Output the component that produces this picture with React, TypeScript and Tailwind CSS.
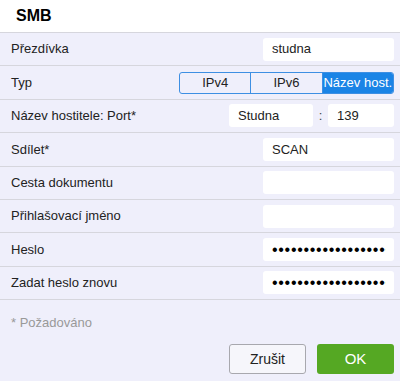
import React, { useState } from 'react';

const FONT = { fontFamily: '"Liberation Sans", Arial, sans-serif' };

const TextBox: React.FC<{ value?: string; className?: string; password?: boolean }> = ({ value = '', className = '', password }) => (
  <div className={`h-[23px] bg-white rounded-[3px] flex items-center pl-[9px] pr-[8px] text-[13px] text-[#222] whitespace-nowrap ${className}`}>
    {password ? (
      <span className="block w-full overflow-hidden text-[16px] leading-[23px] tracking-[0.7px] text-black">{'•'.repeat(20)}</span>
    ) : (
      value
    )}
  </div>
);

const Row: React.FC<{ label: string; children?: React.ReactNode }> = ({ label, children }) => (
  <div className="h-[33.4px] flex items-center justify-between border-b border-[#d6d6dd] pl-[11px] pr-[6px]">
    <span className="text-[13px] text-[#222]">{label}</span>
    {children}
  </div>
);

export default function App() {
  const [typ, setTyp] = useState<'ipv4' | 'ipv6' | 'host'>('host');
  const segs: { id: 'ipv4' | 'ipv6' | 'host'; label: string }[] = [
    { id: 'ipv4', label: 'IPv4' },
    { id: 'ipv6', label: 'IPv6' },
    { id: 'host', label: 'Název host.' },
  ];

  return (
    <div className="w-[400px] h-[381px] bg-[#efeffb] flex flex-col" style={FONT}>
      <div className="h-[33px] bg-white border-b border-[#d6d6dd] flex items-center pl-[16px]">
        <span className="text-[16px] font-bold text-black">SMB</span>
      </div>

      <Row label="Přezdívka">
        <TextBox value="studna" className="w-[131px]" />
      </Row>
      <Row label="Typ">
        <div className="flex w-[215px] h-[22px] border border-[#3d8fe3] rounded-[3px] overflow-hidden text-[13px]">
          {segs.map((s, i) => (
            <button
              key={s.id}
              onClick={() => setTyp(s.id)}
              className={`flex-1 flex items-center justify-center ${i > 0 ? 'border-l border-[#3d8fe3]' : ''} ${
                typ === s.id ? 'bg-[#1a84e6] text-white' : 'bg-transparent text-[#222]'
              }`}
            >
              {s.label}
            </button>
          ))}
        </div>
      </Row>
      <Row label="Název hostitele: Port*">
        <div className="flex items-center">
          <TextBox value="Studna" className="w-[84px]" />
          <span className="w-[15px] text-center text-[13px] text-[#444]">:</span>
          <TextBox value="139" className="w-[66px]" />
        </div>
      </Row>
      <Row label="Sdílet*">
        <TextBox value="SCAN" className="w-[131px]" />
      </Row>
      <Row label="Cesta dokumentu">
        <TextBox className="w-[131px]" />
      </Row>
      <Row label="Přihlašovací jméno">
        <TextBox className="w-[131px]" />
      </Row>
      <Row label="Heslo">
        <TextBox password className="w-[131px]" />
      </Row>
      <Row label="Zadat heslo znovu">
        <TextBox password className="w-[131px]" />
      </Row>

      <div className="pl-[11px] pt-[13px] text-[13px] text-[#999]">* Požadováno</div>

      <div className="mt-auto flex justify-end gap-[11px] pr-[6px] pb-[7px]">
        <button className="w-[77px] h-[30px] rounded-[3px] border border-[#a8a8ae] bg-[#f6f6fb] text-[14px] text-[#222]">
          Zrušit
        </button>
        <button className="w-[77px] h-[30px] rounded-[3px] bg-[#55a823] text-[15px] text-white">
          OK
        </button>
      </div>
    </div>
  );
}
